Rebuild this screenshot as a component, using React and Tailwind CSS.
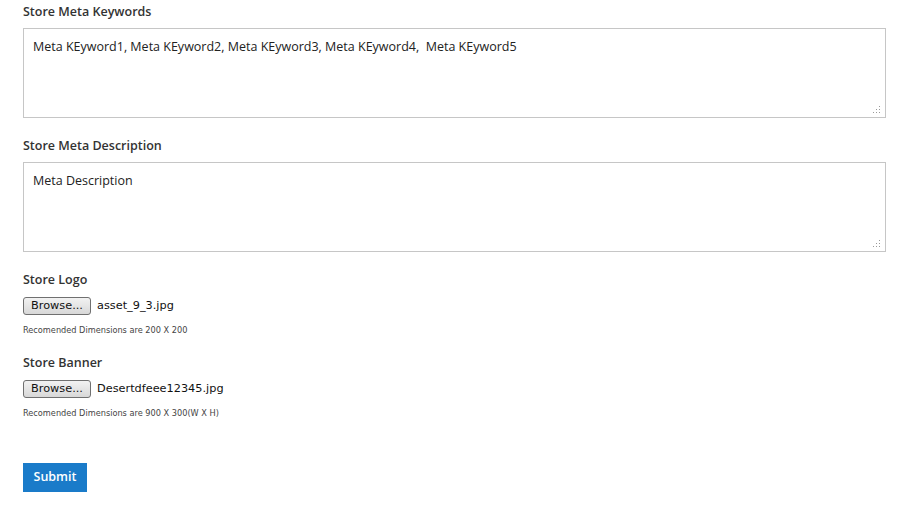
const fields = [
  {
    label: "Store Meta Keywords",
    value: "Meta KEyword1, Meta KEyword2, Meta KEyword3, Meta KEyword4,  Meta KEyword5",
  },
  { label: "Store Meta Description", value: "Meta Description" },
];

const uploads = [
  {
    label: "Store Logo",
    file: "asset_9_3.jpg",
    hint: "Recomended Dimensions are 200 X 200",
  },
  {
    label: "Store Banner",
    file: "Desertdfeee12345.jpg",
    hint: "Recomended Dimensions are 900 X 300(W X H)",
  },
];

function Grip() {
  return (
    <svg
      width="8"
      height="8"
      viewBox="0 0 8 8"
      className="absolute right-[4px] bottom-[3px]"
    >
      {[
        [6, 0],
        [6, 3],
        [3, 3],
        [6, 6],
        [3, 6],
        [0, 6],
      ].map(([x, y]) => (
        <rect key={`${x}-${y}`} x={x} y={y} width="1" height="1" fill="#9a9a9a" />
      ))}
    </svg>
  );
}

export default function App() {
  return (
    <div className="min-h-[514px] bg-white pl-[23px] pr-[33px] pt-[3px] font-['Open_Sans',sans-serif] text-[#333]">
      {fields.map((f) => (
        <div key={f.label} className="mb-[19px]">
          <div className="text-[12.5px] font-semibold leading-[18px] mb-[7px]">
            {f.label}
          </div>
          <div className="relative h-[90px] border border-[#c6c6c6] bg-white px-[9px] pt-[9px] text-[12.5px] leading-[18px] text-[#222] whitespace-pre">
            {f.value}
            <Grip />
          </div>
        </div>
      ))}

      {uploads.map((u) => (
        <div key={u.label} className="mb-[18px]">
          <div className="text-[12.5px] font-semibold leading-[18px] mb-[8px]">
            {u.label}
          </div>
          <div className="flex items-center gap-[6px] h-[18px]">
            <div className="flex h-[18px] w-[68px] items-center justify-center rounded-[3px] border border-[#707070] bg-gradient-to-b from-[#f2f2f2] to-[#d8d8d8] font-['DejaVu_Sans',sans-serif] text-[11.3px] text-[#111]">
              Browse...
            </div>
            <span className="font-['DejaVu_Sans',sans-serif] text-[11.3px] text-[#111]">
              {u.file}
            </span>
          </div>
          <div className="mt-[9px] font-['DejaVu_Sans',sans-serif] text-[8.2px] leading-[12px] text-[#444]">
            {u.hint}
          </div>
        </div>
      ))}

      <button className="mt-[26px] h-[29px] w-[64px] bg-[#1a7bc9] text-[12.5px] font-semibold text-white">
        Submit
      </button>
    </div>
  );
}
